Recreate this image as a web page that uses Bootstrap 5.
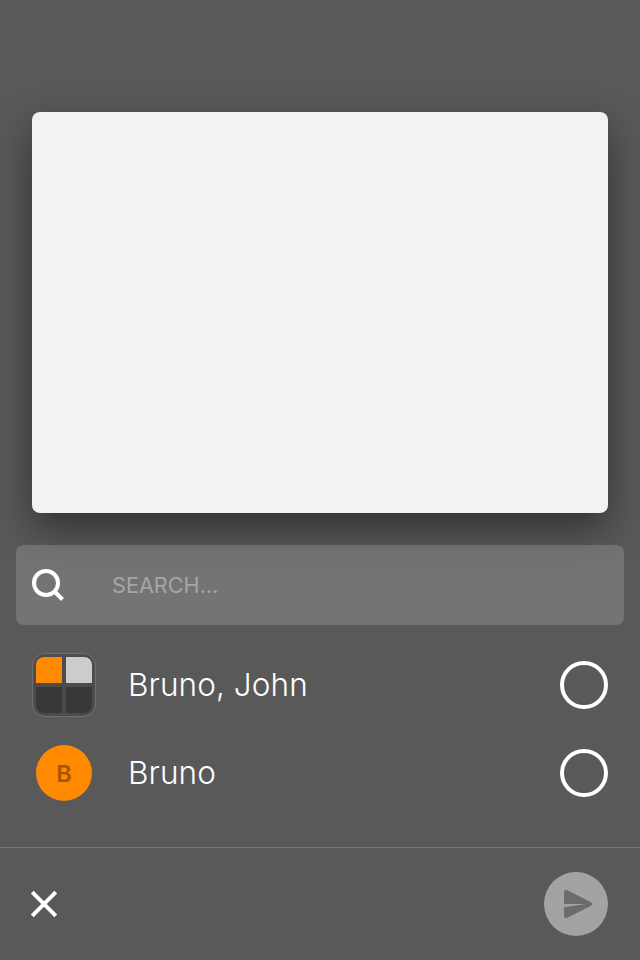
<!DOCTYPE html>
<html lang="en">
<head>
<meta charset="utf-8">
<meta name="viewport" content="width=device-width, initial-scale=1">
<title>Share</title>
<link href="https://cdn.jsdelivr.net/npm/bootstrap@5.3.0/dist/css/bootstrap.min.css" rel="stylesheet">
<style>
body{background:#595959;color:#fff;font-family:Inter,"Liberation Sans",sans-serif;height:960px;overflow:hidden}
.share-screen{height:960px;padding-top:112px}
.preview{height:401px;margin:0 32px 32px;background:#f0f3f2;border-radius:8px;box-shadow:0 16px 40px rgba(0,0,0,.45)}
.search-box{height:80px;margin:0 16px;padding:0 16px;background:rgba(255,255,255,.165);border-radius:8px}
.search-box input,.search-box input:focus{margin-left:48px;background:none;color:#fff;font-size:21.5px;line-height:30px;letter-spacing:.1px}
.search-box input::placeholder{color:#a6a6a6;opacity:1}
.people{padding:16px 32px 0}
.person{height:88px}
.person-name{font-size:31.5px;font-weight:300;line-height:40px;margin-left:32px;letter-spacing:.08px}
.avatar-slot{width:64px}
.group-avatar{width:64px;height:64px;padding:3px;border:1px solid #717171;border-radius:13px;background:#4c4c4c;display:grid;grid-template-columns:26px 26px;grid-template-rows:26px 26px;gap:4px}
.tile{background:#383838}
.tile-nw{background:#ff8900;border-top-left-radius:8px}
.tile-ne{background:#ccc;border-top-right-radius:8px}
.tile-sw{border-bottom-left-radius:8px}
.tile-se{border-bottom-right-radius:8px}
.user-avatar{width:56px;height:56px;padding-top:2px;background:#ff8900;color:#a35700;font-size:23.5px;font-weight:600}
.pick{width:48px;height:48px;border:4px solid #fff;background:none}
.actions{height:113px;border-top:1px solid #767676;padding:0 32px 0 30px}
.send{width:64px;height:64px;background:#a3a3a3;border:0}
</style>
<script src="https://cdn.jsdelivr.net/npm/bootstrap@5.3.0/dist/js/bootstrap.bundle.min.js"></script>
</head>
<body>
<main class="share-screen d-flex flex-column">
  <div class="preview flex-shrink-0"></div>
  <div class="search-box d-flex align-items-center flex-shrink-0">
    <svg width="32" height="32" viewBox="0 0 32 32" fill="none" stroke="#fff" stroke-width="4" class="flex-shrink-0"><circle cx="14" cy="14" r="12"/><path d="M22.5 22.5l8 8"/></svg>
    <input class="form-control border-0 shadow-none p-0" type="text" placeholder="SEARCH..." aria-label="Search">
  </div>
  <ul class="people list-unstyled mb-0 flex-grow-1">
    <li class="person d-flex align-items-center">
      <div class="group-avatar flex-shrink-0"><span class="tile tile-nw"></span><span class="tile tile-ne"></span><span class="tile tile-sw"></span><span class="tile tile-se"></span></div>
      <span class="person-name">Bruno, John</span>
      <button class="pick rounded-circle ms-auto p-0" type="button" aria-label="Select Bruno, John"></button>
    </li>
    <li class="person d-flex align-items-center">
      <div class="avatar-slot d-flex justify-content-center"><div class="user-avatar rounded-circle d-flex align-items-center justify-content-center">B</div></div>
      <span class="person-name">Bruno</span>
      <button class="pick rounded-circle ms-auto p-0" type="button" aria-label="Select Bruno"></button>
    </li>
  </ul>
  <footer class="actions d-flex align-items-center justify-content-between flex-shrink-0">
    <button class="btn p-0 border-0 d-flex" type="button" aria-label="Close"><svg width="28" height="28" viewBox="0 0 28 28" fill="none" stroke="#fff" stroke-width="4"><path d="M2.2 2.2l23.6 23.6M25.8 2.2L2.2 25.8"/></svg></button>
    <button class="send rounded-circle p-0 d-flex" type="button" aria-label="Send"><svg width="64" height="64" viewBox="0 0 64 64" fill="#6b6d6d"><path d="M20 32V20.5Q20 17 23.5 18.3L46.5 30Q48.2 31 48.2 32Z"/><path d="M20 35.2L42 32H48.2Q48.2 33 46.5 34L23.5 45.7Q20 47 20 43.5Z"/></svg></button>
  </footer>
</main>
</body>
</html>
